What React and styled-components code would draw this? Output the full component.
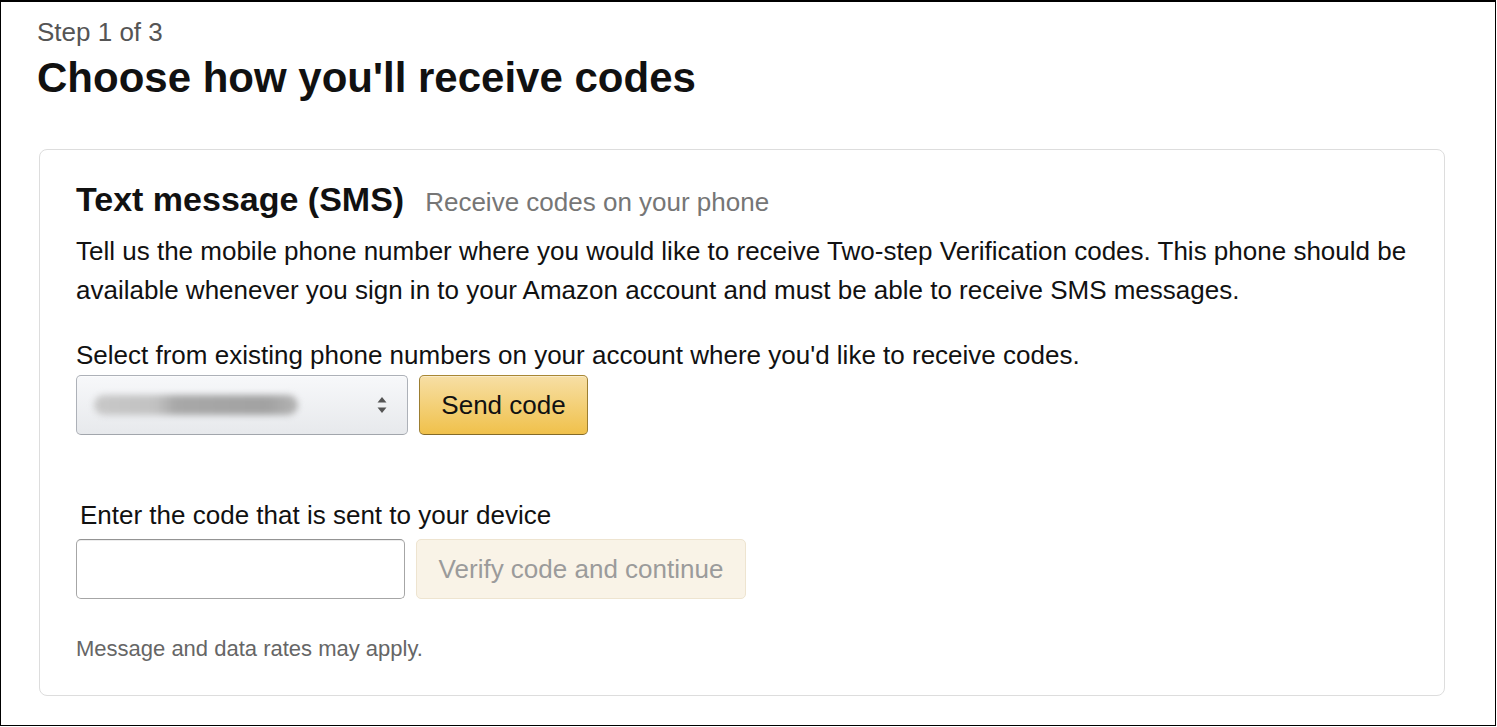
import React from "react";
import styled, { createGlobalStyle } from "styled-components";

const Global = createGlobalStyle`
  html, body { margin: 0; padding: 0; background: #fff; }
  body { font-family: "Liberation Sans", Arial, Helvetica, sans-serif; color: #111; }
  * { box-sizing: border-box; }
`;

const Frame = styled.div`
  width: 1496px;
  height: 726px;
  border: 1px solid #000;
  border-top-width: 2px;
  padding: 15px 50px 0 36px;
  overflow: hidden;
`;

const StepText = styled.div`
  font-size: 26px;
  line-height: 30px;
  color: #555;
`;

const Title = styled.h1`
  margin: 6px 0 0 0;
  font-size: 42px;
  line-height: 50px;
  font-weight: 700;
  color: #111;
`;

const Card = styled.section`
  margin: 46px 0 0 2px;
  border: 1px solid #ddd;
  border-radius: 8px;
  padding: 29px 20px 30px 36px;
`;

const CardHead = styled.div`
  display: flex;
  align-items: baseline;
  gap: 21px;
  line-height: 40px;
`;

const CardTitle = styled.h2`
  margin: 0;
  font-size: 34px;
  font-weight: 700;
  color: #111;
`;

const CardSub = styled.span`
  font-size: 26px;
  color: #767676;
`;

const Para = styled.p`
  margin: ${(p) => p.$mt || 0}px 0 0 ${(p) => p.$ml || 0}px;
  font-size: 26px;
  line-height: 39px;
  color: #111;
`;

const Row = styled.div`
  display: flex;
  gap: 11px;
  margin-top: ${(p) => p.$mt || 0}px;
`;

const SelectBox = styled.div`
  width: 332px;
  height: 60px;
  border: 1px solid #adb1b8;
  border-bottom-color: #a2a6ac;
  border-radius: 5px;
  background: linear-gradient(to bottom, #f7f8fa, #e7e9ec);
  box-shadow: 0 1px 0 rgba(255, 255, 255, 0.6) inset;
  display: flex;
  align-items: center;
  padding: 0 18px 0 17px;
  justify-content: space-between;
`;

const Blur = styled.div`
  width: 204px;
  height: 20px;
  border-radius: 10px;
  background: linear-gradient(to right, #c8c8c8 0%, #c2c2c2 30%, #a8a8a8 40%, #a2a2a2 85%, #b4b4b4 100%);
  filter: blur(3px);
`;

const Arrows = styled.svg`
  width: 12px;
  height: 18px;
  margin-right: 1px;
`;

const PrimaryButton = styled.button`
  width: 169px;
  height: 60px;
  border: 1px solid #a88734;
  border-color: #a88734 #9c7e31 #846a29;
  border-radius: 5px;
  background: linear-gradient(to bottom, #f7dfa5, #f0c14b);
  box-shadow: 0 1px 0 rgba(255, 255, 255, 0.4) inset;
  font-family: inherit;
  font-size: 26px;
  color: #111;
  padding: 0;
`;

const CodeInput = styled.input`
  width: 329px;
  height: 60px;
  border: 1px solid #a6a6a6;
  border-top-color: #949494;
  border-radius: 5px;
  box-shadow: 0 1px 0 rgba(255, 255, 255, 0.5), 0 1px 0 rgba(0, 0, 0, 0.07) inset;
  background: #fff;
  font-family: inherit;
  font-size: 26px;
  padding: 0 12px;
  outline: none;
`;

const DisabledButton = styled.button`
  width: 330px;
  height: 60px;
  border: 1px solid #eee4d0;
  border-radius: 5px;
  background: #f9f3e7;
  font-family: inherit;
  font-size: 26px;
  color: #9b9b9b;
  padding: 0;
`;

const Note = styled.p`
  margin: 33px 0 0 0;
  font-size: 22px;
  line-height: 33px;
  color: #666;
`;

export default function App() {
  return (
    <>
      <Global />
      <Frame>
        <StepText>Step 1 of 3</StepText>
        <Title>Choose how you'll receive codes</Title>
        <Card>
          <CardHead>
            <CardTitle>Text message (SMS)</CardTitle>
            <CardSub>Receive codes on your phone</CardSub>
          </CardHead>
          <Para $mt={10}>
            Tell us the mobile phone number where you would like to receive Two-step Verification codes. This phone should be available whenever you sign in to your Amazon account and must be able to receive SMS messages.
          </Para>
          <Para $mt={26}>
            Select from existing phone numbers on your account where you'd like to receive codes.
          </Para>
          <Row>
            <SelectBox>
              <Blur />
              <Arrows viewBox="0 0 12 18">
                <path d="M6 1 L10.5 6.5 L1.5 6.5 Z" fill="#555" />
                <path d="M6 17 L10.5 11.5 L1.5 11.5 Z" fill="#555" />
              </Arrows>
            </SelectBox>
            <PrimaryButton>Send code</PrimaryButton>
          </Row>
          <Para $mt={61} $ml={4}>Enter the code that is sent to your device</Para>
          <Row $mt={4}>
            <CodeInput type="text" />
            <DisabledButton disabled>Verify code and continue</DisabledButton>
          </Row>
          <Note>Message and data rates may apply.</Note>
        </Card>
      </Frame>
    </>
  );
}
